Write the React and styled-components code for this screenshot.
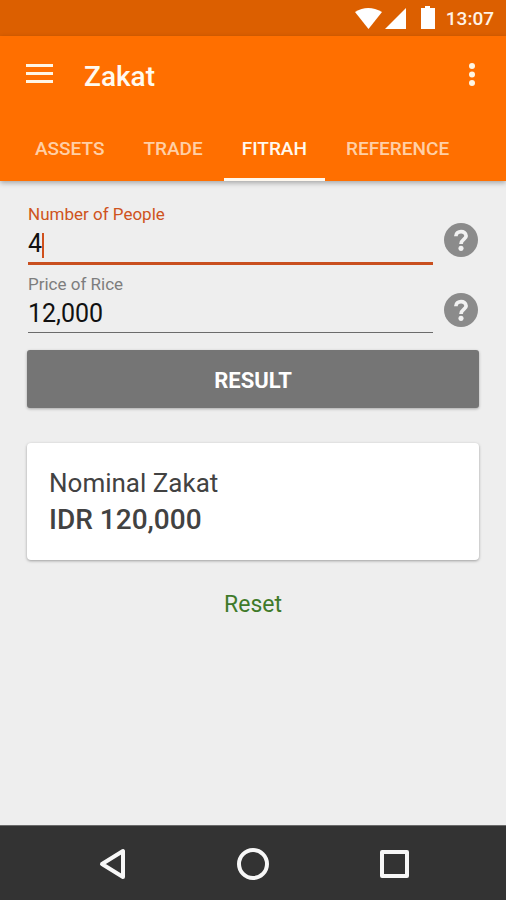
import React, { useState } from "react";
import styled, { createGlobalStyle } from "styled-components";

const GlobalStyle = createGlobalStyle`
  * {
    box-sizing: border-box;
  }
  body {
    margin: 0;
    background-color: #eeeeee;
    font-family: Roboto, "Liberation Sans", sans-serif;
  }
  button,
  input {
    font-family: inherit;
    border: none;
    border-radius: 0;
    padding: 0;
    margin: 0;
    background: none;
    outline: none;
  }
  button {
    cursor: pointer;
  }
  svg {
    display: block;
  }
`;

const Page = styled.div`
  display: flex;
  flex-direction: column;
  min-height: 100vh;
`;

const StatusBar = styled.div`
  display: flex;
  align-items: center;
  justify-content: flex-end;
  height: 36px;
  padding-right: 12px;
  background-color: #dc5f00;
  color: #fff3e6;
  font-size: 19px;
  font-weight: 500;
`;

const StatusIcons = styled.svg`
  margin-right: 10px;
`;

const Header = styled.header`
  background-color: #ff6f00;
  box-shadow: 0 2px 5px rgba(0, 0, 0, 0.3);
`;

const Toolbar = styled.div`
  display: flex;
  align-items: center;
  height: 78px;
  padding: 0 24px;
`;

const IconButton = styled.button`
  color: #fff6e5;
`;

const Title = styled.h1`
  flex: 1;
  margin: 0 0 0 29px;
  padding-top: 4px;
  color: #fffaf0;
  font-size: 28px;
  font-weight: 500;
  line-height: 32px;
`;

const Tabs = styled.nav`
  display: flex;
  gap: 3px;
  height: 67px;
  padding-left: 17px;
`;

const Tab = styled.button`
  padding: 2px 18px 0;
  border-top: 3px solid transparent;
  border-bottom: 3px solid ${(props) => (props.$active ? "#fff8ee" : "transparent")};
  color: ${(props) => (props.$active ? "#fff8ee" : "#ffcfa6")};
  font-size: 19px;
  font-weight: 500;
  white-space: nowrap;
`;

const Main = styled.main`
  flex: 1;
  display: flex;
  flex-direction: column;
  padding: 22px 27px;
`;

const FieldRow = styled.div`
  display: flex;
  align-items: flex-start;
  gap: 11px;
  height: 70px;
  padding: 0 1px;
`;

const Field = styled.div`
  flex: 1;
  min-width: 0;
`;

const Label = styled.label`
  display: block;
  color: ${(props) => (props.$active ? "#cf5320" : "#7d7d7d")};
  font-size: 17px;
  line-height: 22px;
`;

const InputBox = styled.div`
  position: relative;
  border-bottom: ${(props) => (props.$active ? "3px solid #c94f1f" : "1px solid #6b6b6b")};
  font-size: 25px;
`;

const Input = styled.input`
  display: block;
  width: 100%;
  height: 37px;
  color: #111111;
  font-size: 25px;
  caret-color: transparent;
`;

const Caret = styled.span`
  position: absolute;
  top: 8px;
  width: 2px;
  height: 25px;
  background-color: #d0501c;
`;

const HelpButton = styled.button`
  margin-top: 20px;
  color: #8b8b8b;
`;

const ResultButton = styled.button`
  height: 58px;
  margin-top: 7px;
  padding-top: 2px;
  border-radius: 3px;
  background-color: #757575;
  box-shadow: 0 1px 3px rgba(0, 0, 0, 0.3);
  color: #ffffff;
  font-size: 22px;
  font-weight: 700;
`;

const Card = styled.section`
  margin-top: 35px;
  padding: 22px;
  border-radius: 4px;
  background-color: #ffffff;
  box-shadow: 0 1px 3px rgba(0, 0, 0, 0.35);
  color: #424242;
`;

const CardTitle = styled.h2`
  margin: 0;
  font-size: 26px;
  font-weight: 400;
  line-height: 36px;
`;

const Amount = styled.p`
  margin: 0;
  font-size: 28px;
  font-weight: 500;
  line-height: 37px;
`;

const ResetButton = styled.button`
  align-self: center;
  margin-top: 29px;
  color: #3f7a2a;
  font-size: 23px;
  line-height: 32px;
`;

const NavBar = styled.footer`
  display: grid;
  grid-template-columns: repeat(3, 1fr);
  height: 75px;
  padding: 2px 43px 0;
  border-top: 1px solid #6a6a6a;
  background-color: #333333;
`;

const NavButton = styled.button`
  display: flex;
  align-items: center;
  justify-content: center;
  color: #f7f7f7;
`;

const tabs = ["ASSETS", "TRADE", "FITRAH", "REFERENCE"];

const HelpIcon = () => (
  <svg width="34" height="34" viewBox="2 2 20 20" fill="currentColor">
    <circle cx="12" cy="12" r="10" />
    <path
      d="M9 9.8 C9 6.2 15 6.2 15 9.6 C15 11.6 12 11.8 12 14.3"
      fill="none"
      stroke="#f1f1f1"
      strokeWidth="2.2"
    />
    <circle cx="12" cy="16.9" r="1.5" fill="#f1f1f1" />
  </svg>
);

const TextField = ({ id, label, value, active, onChange, onFocus }) => (
  <FieldRow>
    <Field>
      <Label htmlFor={id} $active={active}>
        {label}
      </Label>
      <InputBox $active={active}>
        <Input
          id={id}
          inputMode="numeric"
          value={value}
          onFocus={onFocus}
          onChange={(e) => onChange(e.target.value)}
        />
        {active && <Caret style={{ left: `${value.length}ch` }} />}
      </InputBox>
    </Field>
    <HelpButton type="button" aria-label={`Help: ${label}`}>
      <HelpIcon />
    </HelpButton>
  </FieldRow>
);

const App = () => {
  const [tab, setTab] = useState("FITRAH");
  const [focused, setFocused] = useState("people");
  const [people, setPeople] = useState("4");
  const [price, setPrice] = useState("12,000");
  const [amount, setAmount] = useState("120,000");

  const calculate = () => {
    // 2.5 kg of rice for each person
    const total = Number(people) * Number(price.replace(/,/g, "")) * 2.5;
    setAmount((total || 0).toLocaleString("en-US"));
  };

  const reset = () => {
    setPeople("");
    setPrice("");
    setAmount("0");
  };

  return (
    <Page>
      <GlobalStyle />
      <StatusBar>
        <StatusIcons width="82" height="24" viewBox="0 0 82 24" fill="#ffffff">
          <path d="M1 6 Q14 -2 28 6 L14.5 23 Z" />
          <path d="M52 2 V23 H31 Z" />
          <path d="M71 0 H76 V2 H81 V23 H67 V2 H71 Z" />
        </StatusIcons>
        13:07
      </StatusBar>
      <Header>
        <Toolbar>
          <IconButton type="button" aria-label="Menu">
            <svg width="31" height="22" viewBox="0 0 31 22" fill="currentColor">
              <path d="M2 0 H29 V3 H2 Z M2 8 H29 V11 H2 Z M2 16 H29 V19 H2 Z" />
            </svg>
          </IconButton>
          <Title>Zakat</Title>
          <IconButton type="button" aria-label="More options">
            <svg width="20" height="24" viewBox="0 0 20 24" fill="currentColor">
              <circle cx="10" cy="3" r="3" />
              <circle cx="10" cy="11.5" r="3" />
              <circle cx="10" cy="20" r="3" />
            </svg>
          </IconButton>
        </Toolbar>
        <Tabs>
          {tabs.map((name) => (
            <Tab key={name} type="button" $active={name === tab} onClick={() => setTab(name)}>
              {name}
            </Tab>
          ))}
        </Tabs>
      </Header>
      <Main>
        <TextField
          id="people"
          label="Number of People"
          value={people}
          active={focused === "people"}
          onFocus={() => setFocused("people")}
          onChange={setPeople}
        />
        <TextField
          id="price"
          label="Price of Rice"
          value={price}
          active={focused === "price"}
          onFocus={() => setFocused("price")}
          onChange={setPrice}
        />
        <ResultButton type="button" onClick={calculate}>
          RESULT
        </ResultButton>
        <Card>
          <CardTitle>Nominal Zakat</CardTitle>
          <Amount>IDR {amount}</Amount>
        </Card>
        <ResetButton type="button" onClick={reset}>
          Reset
        </ResetButton>
      </Main>
      <NavBar>
        <NavButton type="button" aria-label="Back">
          <svg width="32" height="32" viewBox="0 0 32 32" fill="none" stroke="currentColor">
            <path d="M26 3 V29 L5 16 Z" strokeWidth="4" strokeLinejoin="round" />
          </svg>
        </NavButton>
        <NavButton type="button" aria-label="Home">
          <svg width="32" height="32" viewBox="0 0 32 32" fill="none" stroke="currentColor">
            <circle cx="16" cy="16" r="14" strokeWidth="4" />
          </svg>
        </NavButton>
        <NavButton type="button" aria-label="Recent apps">
          <svg width="32" height="32" viewBox="0 0 32 32" fill="none" stroke="currentColor">
            <rect x="5" y="4" width="25" height="24" strokeWidth="4" strokeLinejoin="round" />
          </svg>
        </NavButton>
      </NavBar>
    </Page>
  );
};

export default App;
